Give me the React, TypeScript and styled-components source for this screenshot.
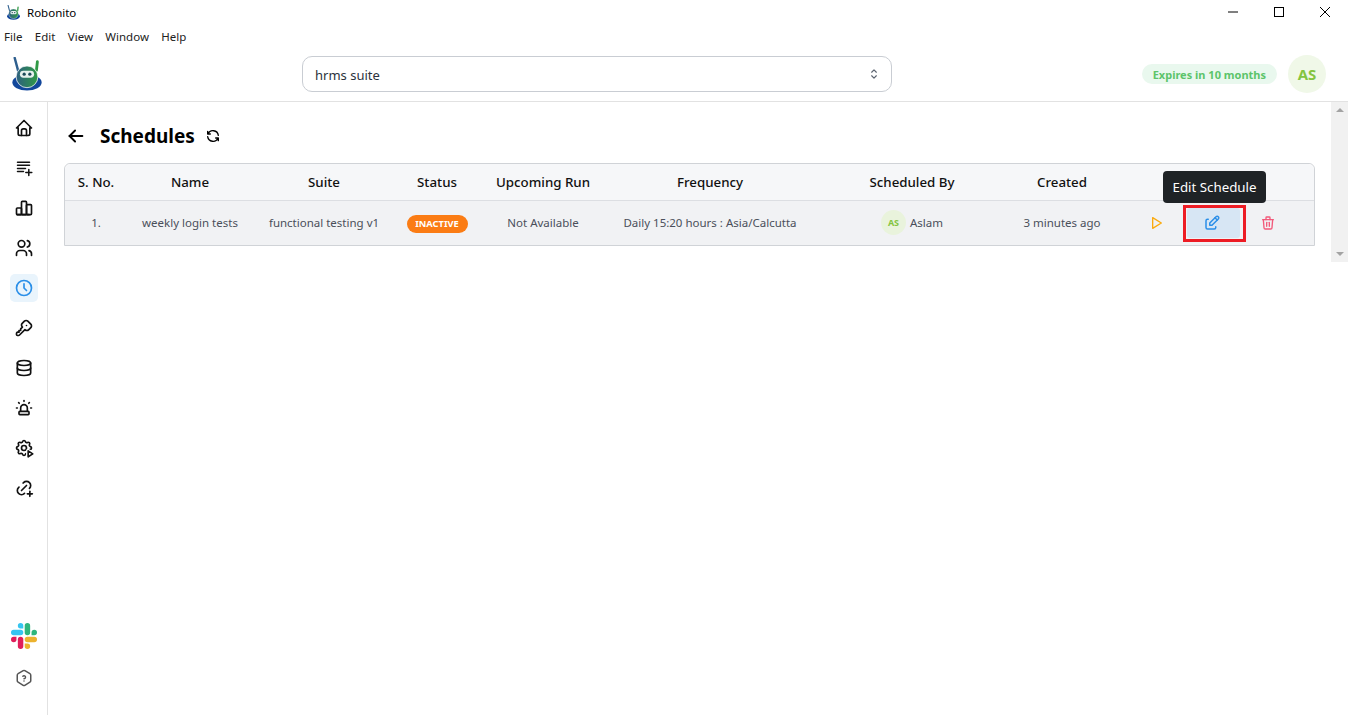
import React from 'react';
import styled, {createGlobalStyle} from 'styled-components';
import {
  TbArrowLeft,
  TbChartBar,
  TbClock,
  TbDatabase,
  TbEdit,
  TbHelpHexagon,
  TbHome,
  TbKey,
  TbLinkPlus,
  TbPlayerPlay,
  TbRefresh,
  TbSelector,
  TbTrash,
  TbUrgent,
  TbUsers,
} from 'react-icons/tb';

const GlobalStyle = createGlobalStyle`
  html, body {
    margin: 0;
    padding: 0;
    height: 100%;
    overflow: hidden;
    background: #ffffff;
    font-family: "Noto Sans", "Open Sans", sans-serif;
  }
  * { box-sizing: border-box; }
`;

const RobotLogo = ({size}: {size: number}) => (
  <svg width={size} height={size} viewBox="0 0 32 36" fill="none">
    <defs>
      <linearGradient id={`head${size}`} x1="0" y1="0" x2="1" y2="0">
        <stop offset="0" stopColor="#2d5f80" />
        <stop offset="1" stopColor="#2f9a45" />
      </linearGradient>
    </defs>
    <ellipse cx="16" cy="27" rx="15.5" ry="8.5" fill="#12479b" />
    <path d="M3 1 L7 16" stroke="#2e5f8e" strokeWidth="2.6" strokeLinecap="round" />
    <path d="M27 5 L26 14" stroke="#2f9a45" strokeWidth="3" strokeLinecap="round" />
    <circle cx="16" cy="21" r="11.5" fill={`url(#head${size})`} stroke="#ffffff" strokeWidth="0.8" />
    <rect x="8.5" y="14.5" width="15" height="7.5" rx="3.7" fill="#e6f0ee" />
    <circle cx="13" cy="18.2" r="1.7" fill="#1c4a5a" />
    <circle cx="19" cy="18.2" r="1.7" fill="#1c4a5a" />
  </svg>
);

const SlackLogo = () => (
  <svg width="26" height="26" viewBox="0 0 122.8 122.8">
    <path d="M25.8 77.6a12.9 12.9 0 1 1-12.9-12.9h12.9v12.9zM32.3 77.6a12.9 12.9 0 0 1 25.8 0v32.3a12.9 12.9 0 0 1-25.8 0V77.6z" fill="#e01e5a" />
    <path d="M45.2 25.8a12.9 12.9 0 1 1 12.9-12.9v12.9H45.2zM45.2 32.3a12.9 12.9 0 0 1 0 25.8H12.9a12.9 12.9 0 0 1 0-25.8h32.3z" fill="#36c5f0" />
    <path d="M97 45.2a12.9 12.9 0 1 1 12.9 12.9H97V45.2zM90.5 45.2a12.9 12.9 0 0 1-25.8 0V12.9a12.9 12.9 0 0 1 25.8 0v32.3z" fill="#2eb67d" />
    <path d="M77.6 97a12.9 12.9 0 1 1-12.9 12.9V97h12.9zM77.6 90.5a12.9 12.9 0 0 1 0-25.8h32.3a12.9 12.9 0 0 1 0 25.8H77.6z" fill="#ecb22e" />
  </svg>
);

// four lines with a plus, the package's playlist icon only has three
const QueueAddIcon = ({size}: {size: number}) => (
  <svg width={size} height={size} viewBox="0 0 20 20" fill="none" stroke="currentColor" strokeWidth="1.5" strokeLinecap="round">
    <path d="M3.5 4.2h12M3.5 7.3h12M3.5 10.4h8M3.5 13.5h6M14.8 11.6v6M11.8 14.6h6" />
  </svg>
);

const GearPlayIcon = ({size}: {size: number}) => (
  <svg width={size} height={size} viewBox="0 0 24 24" fill="none" stroke="currentColor" strokeWidth="2" strokeLinecap="round" strokeLinejoin="round">
    <path d="M10.325 4.317c.426 -1.756 2.924 -1.756 3.35 0a1.724 1.724 0 0 0 2.573 1.066c1.543 -.94 3.31 .826 2.37 2.37a1.724 1.724 0 0 0 1.065 2.572c1.756 .426 1.756 2.924 0 3.35a1.724 1.724 0 0 0 -1.066 2.573c.94 1.543 -.826 3.31 -2.37 2.37a1.724 1.724 0 0 0 -2.572 1.065c-.426 1.756 -2.924 1.756 -3.35 0a1.724 1.724 0 0 0 -2.573 -1.066c-1.543 .94 -3.31 -.826 -2.37 -2.37a1.724 1.724 0 0 0 -1.065 -2.572c-1.756 -.426 -1.756 -2.924 0 -3.35a1.724 1.724 0 0 0 1.066 -2.573c-.94 -1.543 .826 -3.31 2.37 -2.37c1 .608 2.296 .07 2.572 -1.065z" />
    <circle cx="12" cy="12" r="3" />
    <path d="M17 15.5l5.5 3.5l-5.5 3.5z" stroke="#ffffff" strokeWidth="5" fill="#ffffff" />
    <path d="M17 15.5l5.5 3.5l-5.5 3.5z" />
  </svg>
);

const columns = [
  {label: 'S. No.', width: 64},
  {label: 'Name', width: 124},
  {label: 'Suite', width: 144},
  {label: 'Status', width: 82},
  {label: 'Upcoming Run', width: 130},
  {label: 'Frequency', width: 204},
  {label: 'Scheduled By', width: 200},
  {label: 'Created', width: 100},
  {label: '', width: 203},
];

const navIcons = [
  {icon: TbHome},
  {icon: QueueAddIcon},
  {icon: TbChartBar},
  {icon: TbUsers},
  {icon: TbClock, active: true},
  {icon: TbKey},
  {icon: TbDatabase},
  {icon: TbUrgent},
  {icon: GearPlayIcon},
  {icon: TbLinkPlus},
];

const App = () => {
  return (
    <>
      <GlobalStyle />
      <Page>
        <TitleBar>
          <TitleLeft>
            <RobotLogo size={15} />
            <TitleText>Robonito</TitleText>
          </TitleLeft>
          <WindowControls>
            <WindowButton>
              <svg width="12" height="12" viewBox="0 0 12 12">
                <path d="M1 6h10" stroke="#000" strokeWidth="1" />
              </svg>
            </WindowButton>
            <WindowButton>
              <svg width="12" height="12" viewBox="0 0 12 12">
                <rect x="1.5" y="1.5" width="9" height="9" fill="none" stroke="#000" strokeWidth="1" />
              </svg>
            </WindowButton>
            <WindowButton>
              <svg width="12" height="12" viewBox="0 0 12 12">
                <path d="M1 1l10 10M11 1L1 11" stroke="#000" strokeWidth="1" />
              </svg>
            </WindowButton>
          </WindowControls>
        </TitleBar>
        <MenuBar>
          {['File', 'Edit', 'View', 'Window', 'Help'].map((item) => (
            <MenuItem key={item}>{item}</MenuItem>
          ))}
        </MenuBar>
        <Header>
          <LogoSlot>
            <RobotLogo size={34} />
          </LogoSlot>
          <SuiteSelect>
            <SuiteName>hrms suite</SuiteName>
            <TbSelector size={14} color="#5c6470" />
          </SuiteSelect>
          <HeaderRight>
            <Expiry>Expires in 10 months</Expiry>
            <Avatar>AS</Avatar>
          </HeaderRight>
        </Header>
        <Body>
          <Sidebar>
            <NavList>
              {navIcons.map(({icon: Icon, active}, i) => (
                <NavButton key={i} $active={active}>
                  <Icon size={20} />
                </NavButton>
              ))}
            </NavList>
            <SideBottom>
              <SlackLogo />
              <HelpSlot>
                <TbHelpHexagon size={18} />
              </HelpSlot>
            </SideBottom>
          </Sidebar>
          <Main>
            <PageHead>
              <TbArrowLeft size={22} color="#000" />
              <PageTitle>Schedules</PageTitle>
              <TbRefresh size={16} color="#000" />
            </PageHead>
            <Table>
              <HeadRow>
                {columns.map((c, i) => (
                  <HeadCell key={i} $w={c.width}>
                    {c.label}
                  </HeadCell>
                ))}
              </HeadRow>
              <DataRow>
                <Cell $w={64}>1.</Cell>
                <Cell $w={124}>weekly login tests</Cell>
                <Cell $w={144}>functional testing v1</Cell>
                <Cell $w={82}>
                  <StatusPill>INACTIVE</StatusPill>
                </Cell>
                <Cell $w={130}>Not Available</Cell>
                <Cell $w={204}>Daily 15:20 hours : Asia/Calcutta</Cell>
                <Cell $w={200}>
                  <SmallAvatar>AS</SmallAvatar>
                  Aslam
                </Cell>
                <Cell $w={100}>3 minutes ago</Cell>
                <Actions>
                  <PlayButton>
                    <TbPlayerPlay size={18} />
                  </PlayButton>
                  <EditButton>
                    <TbEdit size={18} />
                    <Highlight />
                    <Tooltip>Edit Schedule</Tooltip>
                  </EditButton>
                  <TrashButton>
                    <TbTrash size={18} />
                  </TrashButton>
                </Actions>
              </DataRow>
            </Table>
          </Main>
          <Scrollbar>
            <ScrollArrow $up />
            <ScrollArrow />
          </Scrollbar>
        </Body>
      </Page>
    </>
  );
};

export default App;

const Page = styled.div`
  width: 1348px;
  height: 715px;
  display: flex;
  flex-direction: column;
  background: #ffffff;
  overflow: hidden;
`;

const TitleBar = styled.div`
  height: 24px;
  flex: none;
  display: flex;
  align-items: center;
  justify-content: space-between;
  padding-left: 6px;
`;

const TitleLeft = styled.div`
  display: flex;
  align-items: center;
  gap: 6px;
`;

const TitleText = styled.span`
  font-size: 11.5px;
  color: #000;
`;

const WindowControls = styled.div`
  display: flex;
`;

const WindowButton = styled.div`
  width: 46px;
  height: 24px;
  display: flex;
  align-items: center;
  justify-content: center;
`;

const MenuBar = styled.div`
  height: 25px;
  flex: none;
  display: flex;
  align-items: center;
  gap: 12.4px;
  padding-left: 4px;
`;

const MenuItem = styled.span`
  font-size: 11.5px;
  color: #222;
`;

const Header = styled.div`
  height: 53px;
  flex: none;
  display: flex;
  align-items: center;
  border-bottom: 1px solid #e2e2e2;
  padding: 0 22px 2px 0;
`;

const LogoSlot = styled.div`
  width: 302px;
  flex: none;
  padding-left: 10px;
  display: flex;
  align-items: center;
`;

const SuiteSelect = styled.div`
  width: 590px;
  height: 36px;
  flex: none;
  border: 1px solid #c9cdd3;
  border-radius: 10px;
  display: flex;
  align-items: center;
  justify-content: space-between;
  padding: 0 10px 0 12px;
`;

const SuiteName = styled.span`
  font-size: 13px;
  line-height: 18px;
  padding-top: 2px;
  color: #2c333d;
`;

const HeaderRight = styled.div`
  margin-left: auto;
  display: flex;
  align-items: center;
  gap: 11px;
`;

const Expiry = styled.div`
  height: 20px;
  padding: 0 11px;
  border-radius: 10px;
  background: #e9f8ee;
  color: #5cc46a;
  font-size: 11px;
  font-weight: 700;
  display: flex;
  align-items: center;
`;

const Avatar = styled.div`
  width: 38px;
  height: 38px;
  border-radius: 50%;
  background: #f0f8e8;
  color: #84c441;
  font-size: 15px;
  font-weight: 700;
  display: flex;
  align-items: center;
  justify-content: center;
`;

const Body = styled.div`
  flex: 1;
  min-height: 0;
  display: flex;
`;

const Sidebar = styled.div`
  width: 48px;
  flex: none;
  border-right: 1px solid #e2e2e2;
  display: flex;
  flex-direction: column;
  justify-content: space-between;
  align-items: center;
  padding: 12px 0 28px;
`;

const NavList = styled.div`
  display: flex;
  flex-direction: column;
  gap: 12px;
`;

const NavButton = styled.div<{$active?: boolean}>`
  width: 28px;
  height: 28px;
  border-radius: 5px;
  display: flex;
  align-items: center;
  justify-content: center;
  color: ${(p) => (p.$active ? '#2b8fe8' : '#111')};
  background: ${(p) => (p.$active ? '#e9f4fc' : 'transparent')};
`;

const SideBottom = styled.div`
  display: flex;
  flex-direction: column;
  align-items: center;
  gap: 20px;
`;

const HelpSlot = styled.div`
  display: flex;
  color: #555;
`;

const Main = styled.div`
  flex: 1;
  min-width: 0;
  padding: 22px 16px 0;
`;

const PageHead = styled.div`
  height: 24px;
  display: flex;
  align-items: center;
  padding-left: 1px;
  margin-bottom: 15px;
`;

const PageTitle = styled.h1`
  margin: 0 10px 0 13px;
  font-size: 19px;
  line-height: 24px;
  font-weight: 700;
  color: #000;
`;

const Table = styled.div`
  width: 1251px;
  border: 1px solid #d0d3d7;
  border-radius: 6px 6px 0 0;
`;

const HeadRow = styled.div`
  height: 37px;
  display: flex;
  background: #f6f7f9;
  border-bottom: 1px solid #dcdee2;
  border-radius: 6px 6px 0 0;
`;

const HeadCell = styled.div<{$w: number}>`
  width: ${(p) => p.$w}px;
  flex: none;
  display: flex;
  align-items: center;
  justify-content: center;
  padding-right: 2px;
  font-size: 13.3px;
  font-weight: 500;
  color: #111;
  white-space: nowrap;
`;

const DataRow = styled.div`
  height: 44px;
  display: flex;
  background: #f1f2f4;
`;

const Cell = styled.div<{$w: number}>`
  width: ${(p) => p.$w}px;
  flex: none;
  display: flex;
  align-items: center;
  justify-content: center;
  gap: 4px;
  font-size: 11.5px;
  color: #4a4f5a;
  white-space: nowrap;
  padding: 0 2px 1px 0;
`;

const StatusPill = styled.span`
  height: 18px;
  width: 61px;
  margin-top: 2px;
  border-radius: 9px;
  background: #fb7c14;
  color: #ffffff;
  font-size: 9.3px;
  font-weight: 700;
  display: flex;
  align-items: center;
  justify-content: center;
`;

const SmallAvatar = styled.span`
  width: 25px;
  height: 25px;
  border-radius: 50%;
  background: #e9f3dc;
  color: #84c441;
  font-size: 9px;
  font-weight: 700;
  display: flex;
  align-items: center;
  justify-content: center;
`;

const Actions = styled.div`
  flex: 1;
  display: flex;
  align-items: center;
  padding-left: 35px;
`;

const PlayButton = styled.div`
  width: 16px;
  display: flex;
  justify-content: center;
  color: #fbaa0e;
`;

const EditButton = styled.div`
  position: relative;
  width: 53px;
  height: 30px;
  margin-left: 23px;
  border-radius: 3px;
  background: #d7e6f4;
  color: #2b8fe8;
  display: flex;
  align-items: center;
  justify-content: center;
  padding-right: 3px;
`;

const Highlight = styled.span`
  position: absolute;
  left: -4px;
  top: -3px;
  width: 63px;
  height: 37px;
  border: 3px solid #ed1c24;
  pointer-events: none;
`;

const Tooltip = styled.div`
  position: absolute;
  left: -24px;
  top: -37px;
  width: 103px;
  height: 32px;
  border-radius: 4px;
  background: #1f2326;
  color: #ffffff;
  font-size: 13.3px;
  display: flex;
  align-items: center;
  justify-content: center;
  white-space: nowrap;
`;

const TrashButton = styled.div`
  width: 16px;
  margin-left: 20px;
  display: flex;
  justify-content: center;
  color: #f25a7a;
`;

const Scrollbar = styled.div`
  width: 17px;
  height: 160px;
  flex: none;
  margin-left: auto;
  background: #f1f1f1;
  display: flex;
  flex-direction: column;
  justify-content: space-between;
  align-items: center;
  padding: 6px 0;
`;

const ScrollArrow = styled.span<{$up?: boolean}>`
  width: 0;
  height: 0;
  border-left: 4px solid transparent;
  border-right: 4px solid transparent;
  ${(p) => (p.$up ? 'border-bottom: 4px solid #a3a3a3;' : 'border-top: 4px solid #a3a3a3;')}
`;
